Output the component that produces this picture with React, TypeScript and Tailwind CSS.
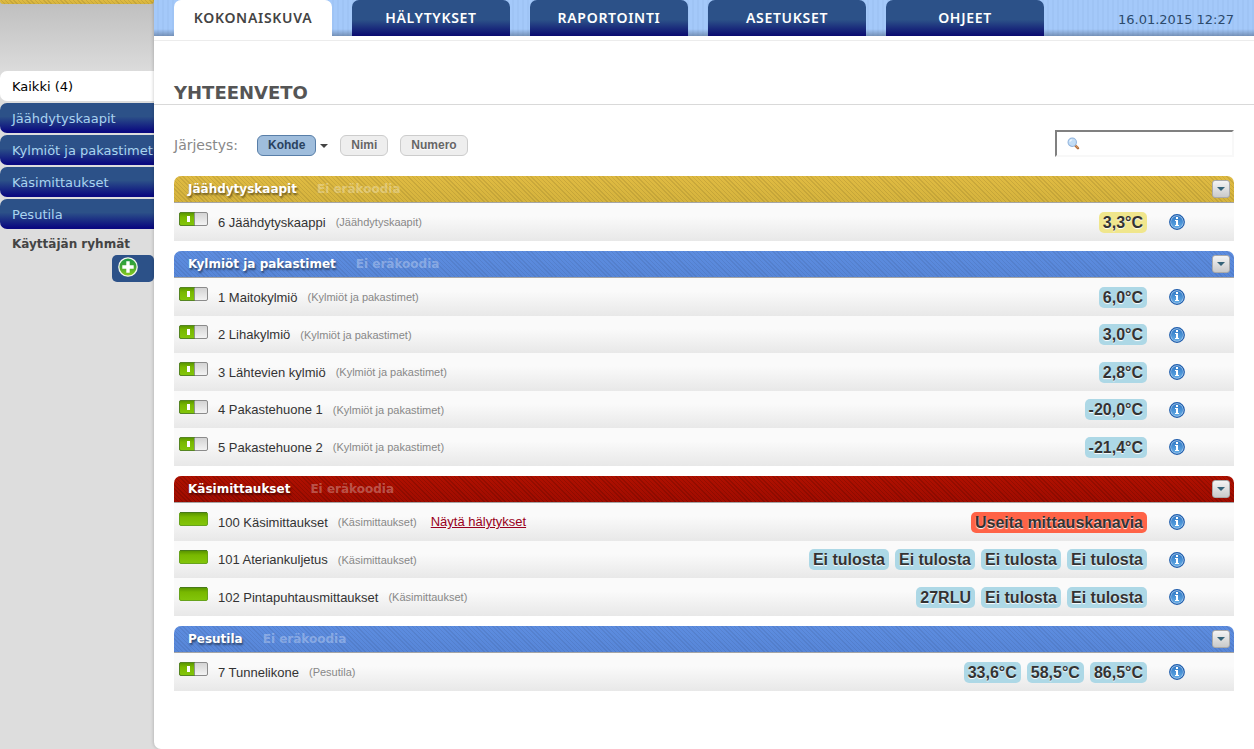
import { useState } from "react";

type Tone = "gold" | "blue" | "red";
type BadgeTone = "cold" | "warm" | "alarm";

type Device = {
  label: string;
  hasSwitch: boolean;
  alarmLink?: string;
  readings: string[];
  tone: BadgeTone;
};

type Group = {
  name: string;
  tone: Tone;
  devices: Device[];
};

const TABS = ["KOKONAISKUVA", "HÄLYTYKSET", "RAPORTOINTI", "ASETUKSET", "OHJEET"];

const SIDE_ITEMS = ["Kaikki (4)", "Jäähdytyskaapit", "Kylmiöt ja pakastimet", "Käsimittaukset", "Pesutila"];

const SORTS = ["Kohde", "Nimi", "Numero"];

const GROUPS: Group[] = [
  {
    name: "Jäähdytyskaapit",
    tone: "gold",
    devices: [{ label: "6 Jäähdytyskaappi", hasSwitch: true, readings: ["3,3°C"], tone: "warm" }],
  },
  {
    name: "Kylmiöt ja pakastimet",
    tone: "blue",
    devices: [
      { label: "1 Maitokylmiö", hasSwitch: true, readings: ["6,0°C"], tone: "cold" },
      { label: "2 Lihakylmiö", hasSwitch: true, readings: ["3,0°C"], tone: "cold" },
      { label: "3 Lähtevien kylmiö", hasSwitch: true, readings: ["2,8°C"], tone: "cold" },
      { label: "4 Pakastehuone 1", hasSwitch: true, readings: ["-20,0°C"], tone: "cold" },
      { label: "5 Pakastehuone 2", hasSwitch: true, readings: ["-21,4°C"], tone: "cold" },
    ],
  },
  {
    name: "Käsimittaukset",
    tone: "red",
    devices: [
      {
        label: "100 Käsimittaukset",
        hasSwitch: false,
        alarmLink: "Näytä hälytykset",
        readings: ["Useita mittauskanavia"],
        tone: "alarm",
      },
      {
        label: "101 Ateriankuljetus",
        hasSwitch: false,
        readings: ["Ei tulosta", "Ei tulosta", "Ei tulosta", "Ei tulosta"],
        tone: "cold",
      },
      {
        label: "102 Pintapuhtausmittaukset",
        hasSwitch: false,
        readings: ["27RLU", "Ei tulosta", "Ei tulosta"],
        tone: "cold",
      },
    ],
  },
  {
    name: "Pesutila",
    tone: "blue",
    devices: [{ label: "7 Tunnelikone", hasSwitch: true, readings: ["33,6°C", "58,5°C", "86,5°C"], tone: "cold" }],
  },
];

// each header is a soft vertical fade under a fine diagonal hatch
const HEADER_TONES: Record<Tone, string> = {
  gold: "bg-[repeating-linear-gradient(45deg,rgba(0,0,0,0.09)_0_1px,transparent_1px_3px),linear-gradient(#e0bb42,#d5b33d)]",
  blue: "bg-[repeating-linear-gradient(45deg,rgba(0,0,0,0.07)_0_1px,transparent_1px_3px),linear-gradient(#5d8de0,#5786d8)]",
  red: "bg-[repeating-linear-gradient(45deg,rgba(0,0,0,0.14)_0_1px,transparent_1px_3px),linear-gradient(#b01000,#a00c00)]",
};

const BADGE_TONES: Record<BadgeTone, string> = {
  cold: "bg-[#add8e6]",
  warm: "bg-[#f0e68c]",
  alarm: "bg-[#ff6347]",
};

function StatusIcon({ split }: { split: boolean }) {
  return (
    <svg width="29" height="14" viewBox="0 0 29 14" aria-hidden="true">
      <defs>
        <linearGradient id="status-green" x1="0" y1="0" x2="0" y2="1">
          <stop offset="0" stopColor="#579200" />
          <stop offset="0.35" stopColor="#78b800" />
          <stop offset="1" stopColor="#83c60a" />
        </linearGradient>
        <linearGradient id="status-grey" x1="0" y1="0" x2="0" y2="1">
          <stop offset="0" stopColor="#d2d2d2" />
          <stop offset="1" stopColor="#f4f4f4" />
        </linearGradient>
      </defs>
      {split ? (
        <>
          <rect x="0.5" y="0.5" width="28" height="13" rx="1.5" fill="url(#status-grey)" stroke="#8b8b8b" />
          <path d="M15.5 .5H2Q.5 .5 .5 2V12Q.5 13.5 2 13.5H15.5Z" fill="url(#status-green)" stroke="#558522" />
          <path d="M15.5 1V13" stroke="#8b968b" />
          <rect x="8" y="4" width="3" height="6" fill="#fff" />
        </>
      ) : (
        <>
          <rect x="0.5" y="0.5" width="28" height="13" rx="1.5" fill="url(#status-green)" stroke="#67a31c" />
          <path d="M1 .5H28" stroke="#477a19" />
        </>
      )}
    </svg>
  );
}

function InfoIcon() {
  return (
    <svg width="16" height="16" viewBox="0 0 16 16" aria-hidden="true">
      <defs>
        <linearGradient id="info-blue" x1="0" y1="0" x2="0" y2="1">
          <stop offset="0" stopColor="#2f78c6" />
          <stop offset="1" stopColor="#64abe4" />
        </linearGradient>
      </defs>
      <circle cx="8" cy="8" r="7.3" fill="#a9cbed" stroke="#1d5cab" strokeWidth="1.2" />
      <circle cx="8" cy="8" r="6" fill="url(#info-blue)" />
      <path d="M7 3h2v2H7zM6 6h3v5h1v1H6v-1h1V7H6z" fill="#fff" />
    </svg>
  );
}

function PlusIcon() {
  return (
    <svg width="20" height="20" viewBox="0 0 20 20" aria-hidden="true">
      <defs>
        <linearGradient id="plus-green" x1="0" y1="0" x2="0" y2="1">
          <stop offset="0" stopColor="#1d9a46" />
          <stop offset="0.5" stopColor="#45a931" />
          <stop offset="1" stopColor="#90cf1c" />
        </linearGradient>
      </defs>
      <circle cx="10" cy="10" r="9.2" fill="url(#plus-green)" stroke="#f3f7ec" strokeWidth="1.3" />
      <path d="M8.3 4.3h3.4v4h4v3.4h-4v4H8.3v-4h-4V8.3h4z" fill="#fff" />
    </svg>
  );
}

function SearchIcon() {
  return (
    <svg width="15" height="15" viewBox="0 0 15 15" aria-hidden="true">
      <path d="M10 10l3 3" stroke="#b06c3a" strokeWidth="3" strokeLinecap="round" />
      <path d="M10.2 9.6l3 3" stroke="#e7b07c" strokeWidth="1" strokeLinecap="round" />
      <circle cx="6.2" cy="6" r="5" fill="#c3ddf5" stroke="#8fb2dc" strokeWidth="1.2" />
      <path d="M3.5 5.5a2.6 2.6 0 0 1 2.6-2.4" fill="none" stroke="#eef6fd" strokeWidth="1.4" />
    </svg>
  );
}

function Caret({ className }: { className: string }) {
  return (
    <svg width="8" height="4" viewBox="0 0 8 4" className={className} aria-hidden="true">
      <path d="M0 0h8L4 4z" fill="currentColor" />
    </svg>
  );
}

function DeviceRow({ device, group }: { device: Device; group: string }) {
  return (
    <li className="flex h-[38px] items-center bg-[linear-gradient(#fafafa_35%,#e8e8e8)] pr-[49px] pl-[5px] even:h-[37px]">
      <span className="pb-[6px]">
        <StatusIcon split={device.hasSwitch} />
      </span>
      <span className="ml-[10px] pt-px text-[13px] text-[#333]">{device.label}</span>
      <span className="ml-[10px] pt-px text-[11px] text-[#888]">({group})</span>
      {device.alarmLink && (
        <a href="#alarms" className="ml-[14px] text-[13px] text-[#990020] underline">
          {device.alarmLink}
        </a>
      )}
      <span className="ml-auto flex gap-[6px]">
        {device.readings.map((reading, i) => (
          <span
            key={i}
            className={`rounded-[5px] px-1 text-[16px] leading-[21px] font-bold text-[#333] [text-shadow:0_1px_1px_#fff] ${BADGE_TONES[device.tone]}`}
          >
            {reading}
          </span>
        ))}
      </span>
      <button type="button" aria-label={`Tiedot ${device.label}`} className="ml-[22px]">
        <InfoIcon />
      </button>
    </li>
  );
}

function GroupPanel({ group }: { group: Group }) {
  const [open, setOpen] = useState(true);

  return (
    <section>
      <header
        className={`flex h-[27px] items-center rounded-t-[7px] border-b border-[#a5a5a5] pr-1 pl-[14px] font-['DejaVu_Sans',sans-serif] text-[12px] font-bold ${HEADER_TONES[group.tone]}`}
      >
        <h2 className="text-white [text-shadow:1px_2px_2px_rgba(0,0,0,0.5)]">{group.name}</h2>
        <span className="ml-5 text-white/30">Ei eräkoodia</span>
        <button
          type="button"
          aria-label={group.name}
          aria-expanded={open}
          onClick={() => setOpen(!open)}
          className="ml-auto flex size-[18px] items-center justify-center rounded-[3px] border border-[#aaa] bg-linear-to-b from-[#f4f4f4] to-[#cacaca]"
        >
          <Caret className="text-[#356378]" />
        </button>
      </header>
      {open && (
        <ul>
          {group.devices.map((device) => (
            <DeviceRow key={device.label} device={device} group={group.name} />
          ))}
        </ul>
      )}
    </section>
  );
}

function Sidebar() {
  return (
    <aside className="w-[154px] shrink-0 bg-[linear-gradient(#bebebe,#dddddd_75px)] font-['DejaVu_Sans',sans-serif]">
      <div className="h-1 rounded-b-[3px] bg-[repeating-linear-gradient(45deg,rgba(0,0,0,0.09)_0_1px,transparent_1px_3px),linear-gradient(#e0bb42,#d5b33d)]" />
      <nav className="mt-[67px] flex flex-col gap-[2px]">
        {SIDE_ITEMS.map((item, i) => (
          <a
            key={item}
            href="#group"
            className={`h-[30px] rounded-l-[7px] pl-3 text-[13px] leading-8 whitespace-nowrap ${
              i === 0 ? "bg-white text-black" : "bg-[linear-gradient(#2c5188_45%,#0a0a80_95%)] text-[#a9d3f0]"
            }`}
          >
            {item}
          </a>
        ))}
      </nav>
      <h2 className="mt-1 pl-3 text-[12px] leading-[22px] font-bold text-[#444]">Käyttäjän ryhmät</h2>
      <button
        type="button"
        aria-label="Lisää ryhmä"
        className="ml-auto flex h-[27px] w-[42px] rounded-[5px] bg-[#2c5188] pt-[2px] pl-[6px]"
      >
        <PlusIcon />
      </button>
    </aside>
  );
}

function TopBar() {
  return (
    <header className="flex h-9 bg-[linear-gradient(transparent_29px,rgba(70,90,120,0.5)),repeating-linear-gradient(90deg,#a4c9fa_0_3px,#9fc4f5_3px_5px)] px-5">
      <nav className="flex gap-5">
        {TABS.map((tab, i) => (
          <a
            key={tab}
            href="#tab"
            className={`w-[158px] rounded-t-[7px] text-center font-['Noto_Sans',sans-serif] text-[14px] leading-9 font-semibold tracking-wider ${
              i === 0 ? "bg-white text-[#444]" : "bg-[linear-gradient(#2c5188_55%,#0a0a70)] text-white"
            }`}
          >
            {tab}
          </a>
        ))}
      </nav>
      <time
        dateTime="2015-01-16T12:27"
        className="ml-auto pt-[2px] font-['DejaVu_Sans',sans-serif] text-[13px] leading-9 text-[#2c4a6c]"
      >
        16.01.2015 12:27
      </time>
    </header>
  );
}

export default function App() {
  const [sort, setSort] = useState("Kohde");
  const [query, setQuery] = useState("");

  return (
    <div className="flex min-h-screen bg-[#ddd] font-['Liberation_Sans',Arial,sans-serif]">
      <Sidebar />
      <div className="flex min-w-0 grow flex-col rounded-bl-[7px] bg-white shadow-[-1px_0_3px_rgba(0,0,0,0.15)]">
        <TopBar />
        <div className="mt-1 border-t border-[#ececec]" />
        <h1 className="mt-[38px] border-b border-[#d9d9d9] pt-[2px] pl-5 font-['DejaVu_Sans',sans-serif] text-[18px] leading-[23px] font-bold text-[#555]">
          YHTEENVETO
        </h1>
        <main className="px-5">
          <div className="mt-[25px] flex items-center">
            <span className="w-[83px] pt-1 font-['DejaVu_Sans',sans-serif] text-[14px] text-[#888]">Järjestys:</span>
            <div className="flex items-center gap-3 pt-1">
              {SORTS.map((name) => (
                <span key={name} className="flex items-center">
                  <button
                    type="button"
                    onClick={() => setSort(name)}
                    className={`rounded-[6px] border px-[10px] text-[12px] leading-[19px] font-bold ${
                      sort === name
                        ? "border-[#587ea8] bg-[#9fbddc] text-[#29425f]"
                        : "border-[#ccc] bg-[#eee] text-[#666] [text-shadow:0_1px_1px_#fff]"
                    }`}
                  >
                    {name}
                  </button>
                  {sort === name && <Caret className="ml-1 text-[#444]" />}
                </span>
              ))}
            </div>
            <label className="ml-auto flex h-[27px] w-[179px] items-center border-2 border-t-[#808080] border-r-[#f8f8f8] border-b-[#f8f8f8] border-l-[#808080] pl-[10px]">
              <SearchIcon />
              <input
                type="search"
                aria-label="Haku"
                value={query}
                onChange={(e) => setQuery(e.target.value)}
                className="ml-1 min-w-0 grow text-[13px] outline-none"
              />
            </label>
          </div>
          <div className="mt-[19px] flex flex-col gap-[10px]">
            {GROUPS.map((group) => (
              <GroupPanel key={group.name} group={group} />
            ))}
          </div>
        </main>
      </div>
    </div>
  );
}
